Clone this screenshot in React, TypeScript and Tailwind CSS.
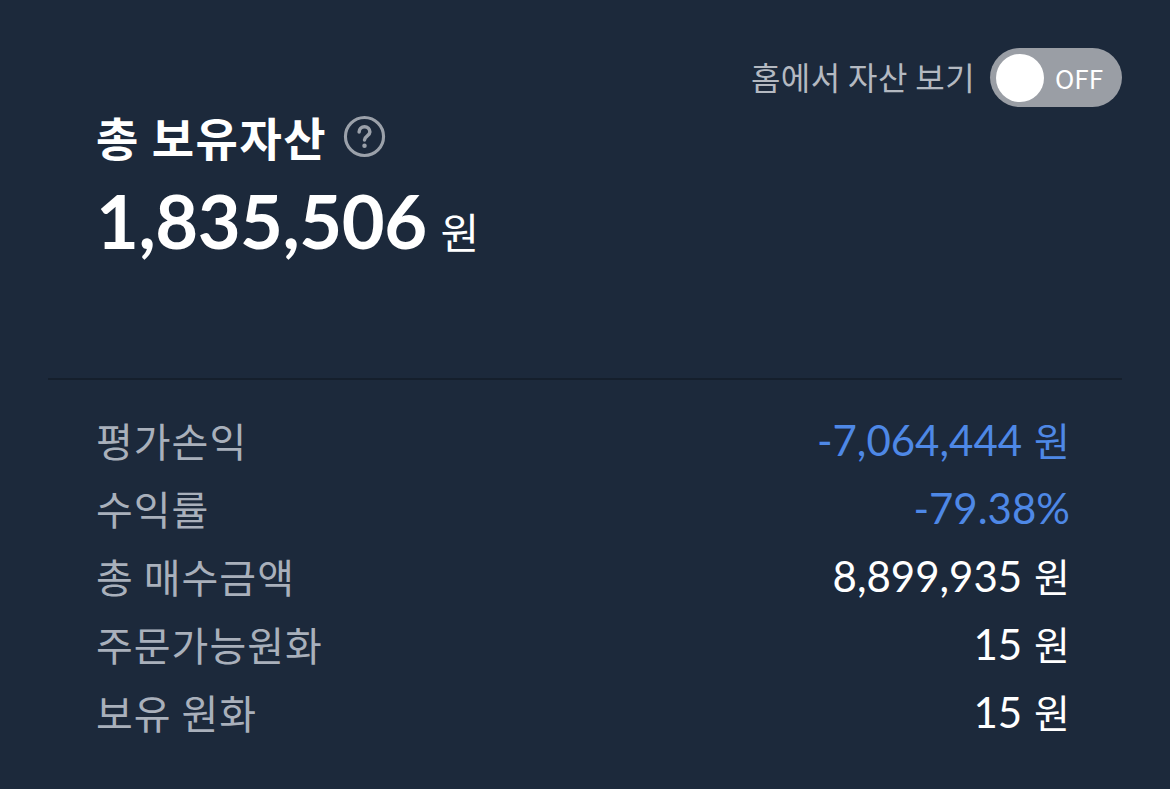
const rows: { label: string; value: string; unit?: string; tone: 'blue' | 'white' }[] = [
  { label: '평가손익', value: '-7,064,444', unit: '원', tone: 'blue' },
  { label: '수익률', value: '-79.38%', tone: 'blue' },
  { label: '총 매수금액', value: '8,899,935', unit: '원', tone: 'white' },
  { label: '주문가능원화', value: '15', unit: '원', tone: 'white' },
  { label: '보유 원화', value: '15', unit: '원', tone: 'white' },
];

const kr = "font-['Noto_Sans_CJK_KR',sans-serif]";
const num = "font-['Lato','Noto_Sans_CJK_KR',sans-serif]";

function HelpIcon() {
  return (
    <svg width="43" height="43" viewBox="0 0 44 44" fill="none" className="text-[#9ba1aa]">
      <circle cx="22" cy="22" r="19.5" stroke="currentColor" strokeWidth="3.2" />
      <path
        d="M16.5 17.5a5.5 5.5 0 0 1 11 0c0 3.6-5.5 4-5.5 8"
        stroke="currentColor"
        strokeWidth="3.6"
        strokeLinecap="round"
      />
      <circle cx="22" cy="31.5" r="2.3" fill="currentColor" />
    </svg>
  );
}

export default function App() {
  return (
    <div className="w-full h-[789px] bg-[#1c293b] overflow-hidden">
      <div className="flex justify-end items-center gap-[15px] pt-[48px] pr-[48px]">
        <span className={`${kr} text-[32px] leading-[40px] tracking-[0.4px] text-[#b4b9c1] -mt-[4px]`}>
          홈에서 자산 보기
        </span>
        <button className="flex items-center w-[132px] h-[59px] rounded-full bg-[#9a9ea5] pl-[6px]">
          <span className="w-[48px] h-[48px] rounded-full bg-white" />
          <span className={`${kr} ml-[11px] text-[26px] leading-none text-white`}>OFF</span>
        </button>
      </div>

      <div className="pl-[96px] pr-[100px]">
        <div className="flex items-center gap-[16px] mt-[4px] h-[50px]">
          <h2 className={`${kr} text-[46px] leading-[50px] font-bold tracking-[1.5px] text-white`}>총 보유자산</h2>
          <HelpIcon />
        </div>
        <div className={`${num} mt-[20px] h-[80px] flex items-baseline text-white`}>
          <span className="text-[74px] leading-[80px] font-bold tracking-[-0.5px]">1,835,506</span>
          <span className={`${kr} ml-[14px] text-[42px]`}>원</span>
        </div>
      </div>

      <div className="mx-[48px] mt-[117px] h-[2px] bg-[#151f2c]" />

      <div className="pl-[96px] pr-[100px] mt-[26px]">
        {rows.map((r) => (
          <div key={r.label} className="flex items-center justify-between h-[68px]">
            <span className={`${kr} text-[40px] tracking-[1px] text-[#a9b0bb]`}>{r.label}</span>
            <span
              className={`${num} text-[42px] ${r.tone === 'blue' ? 'text-[#4e88e6]' : 'text-white'}`}
            >
              {r.value}
              {r.unit && <span className={`${kr} ml-[12px] text-[39px]`}>{r.unit}</span>}
            </span>
          </div>
        ))}
      </div>
    </div>
  );
}
